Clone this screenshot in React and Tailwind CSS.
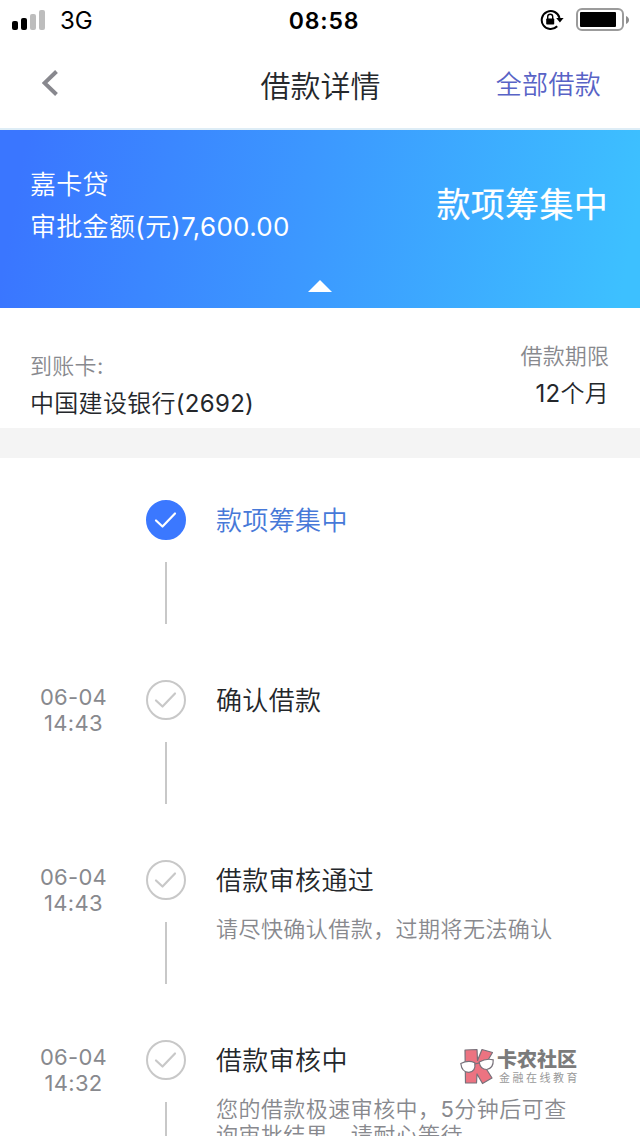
import React from "react";

function StatusBar() {
  return (
    <div className="flex h-10 shrink-0 items-center justify-between pl-3 pr-[11px] text-black">
      <div className="flex w-[160px] items-center">
        <svg width="34" height="20" viewBox="0 0 34 20">
          <rect x="0" y="11" width="6" height="9" rx="2" fill="#000" />
          <rect x="9" y="8" width="6" height="12" rx="2" fill="#000" />
          <rect x="18" y="4" width="6" height="16" rx="2" fill="#bdbdbd" />
          <rect x="27" y="0" width="6" height="20" rx="2" fill="#bdbdbd" />
        </svg>
        <span className="pl-[14px] pt-[2px] text-[24px] leading-[38px]">3G</span>
      </div>
      <span className="pl-[7px] pt-[2px] text-[23px] font-semibold leading-[38px] tracking-[0.8px]">08:58</span>
      <div className="flex w-[160px] items-center justify-end gap-[12px]">
        <svg width="24" height="22" viewBox="0 0 24 22">
          <path d="M17.200 17.300A9 9 0 1 1 19.500 9" fill="none" stroke="#000" strokeWidth="2" />
          <path d="M16.200 9h7.400l-3.700 4.600z" fill="#000" />
          <rect x="6.200" y="9.500" width="8" height="6" rx="0.800" fill="#000" />
          <path d="M7.700 10V7.700a2.500 2.500 0 0 1 5 0V10" fill="none" stroke="#000" strokeWidth="1.400" />
        </svg>
        <svg width="53" height="24" viewBox="0 0 53 24">
          <rect x="1" y="1" width="46" height="21" rx="5" fill="none" stroke="#9b9b9b" strokeWidth="2" />
          <rect x="4" y="4" width="36" height="15" rx="1" fill="#000" />
          <path d="M50 8c4 1.500 4 6.500 0 8z" fill="#8d8d8d" />
        </svg>
      </div>
    </div>
  );
}

function NavBar() {
  return (
    <div className="grid h-[90px] shrink-0 grid-cols-3 border-b-2 border-[#deedf6] pl-[40px] pr-[39px] pt-[24px]">
      <svg className="ml-[2px] mt-[6px]" width="17" height="26" viewBox="0 0 17 26">
        <path d="M14.500 1.500L2.500 13l12 11.500" fill="none" stroke="#88888e" strokeWidth="4" />
      </svg>
      <h1 className="whitespace-nowrap text-center text-[30px] leading-[44px] text-[#24272b]">借款详情</h1>
      <span className="pt-[1px] text-right text-[26px] leading-[40px] tracking-[0.3px] text-[#5863c6]">全部借款</span>
    </div>
  );
}

function Banner() {
  return (
    <div className="flex h-[178px] shrink-0 flex-col bg-[linear-gradient(100deg,#3a76ff_4%,#3c98ff_48%,#3dc0ff_97%)] text-white">
      <div className="flex h-[150px] justify-between pl-[30px] pr-8 pt-[34px]">
        <div className="text-[26px] leading-[42px] tracking-[0.3px]">
          <div>嘉卡贷</div>
          <div>审批金额(元)7,600.00</div>
        </div>
        <div className="mt-[16px] font-['Noto_Sans_CJK_SC',sans-serif] text-[34px] font-normal leading-[46px] tracking-[0.3px] [-webkit-text-stroke:0.2px_#fff]">款项筹集中</div>
      </div>
      <svg className="mx-auto" width="24" height="12" viewBox="0 0 24 12">
        <path d="M12 0l12 12H0z" fill="#fff" />
      </svg>
    </div>
  );
}

function CardInfo() {
  return (
    <div className="flex h-[120px] shrink-0 justify-between pl-[30px] pr-[31px] text-[24px] leading-[38px] text-[#24272b]">
      <div className="pt-[39px]">
        <div className="text-[22px] tracking-[0.3px] text-[#88898e]">到账卡:</div>
        <div className="tracking-[0.3px]">中国建设银行(2692)</div>
      </div>
      <div className="pt-[29px] text-right">
        <div className="text-[22px] tracking-[0.1px] text-[#88898e]">借款期限</div>
        <div className="tracking-[0.3px]">12个月</div>
      </div>
    </div>
  );
}

const steps = [
  { title: "款项筹集中", active: true },
  { title: "确认借款", date: "06-04", time: "14:43" },
  { title: "借款审核通过", date: "06-04", time: "14:43", desc: ["请尽快确认借款，过期将无法确认"] },
  { title: "借款审核中", date: "06-04", time: "14:32", desc: ["您的借款极速审核中，5分钟后可查", "询审批结果，请耐心等待"] },
];

function Step({ step }) {
  return (
    <li className="flex h-[180px] shrink-0">
      <div className="w-[147px] pt-[4px] text-center text-[22px] leading-[26px] tracking-[0.3px] text-[#88898e]">
        <div>{step.date}</div>
        <div>{step.time}</div>
      </div>
      <div className="-ml-px flex w-10 flex-col items-center gap-[22px]">
        <svg width="40" height="40" viewBox="0 0 40 40" className="shrink-0">
          <circle cx="20" cy="20" r="19" fill={step.active ? "#3b78ff" : "#fff"} stroke={step.active ? "#3b78ff" : "#c8c8c8"} strokeWidth="2" />
          <path d="M10 20.500l6.500 6L29 13.500" fill="none" stroke={step.active ? "#fff" : "#c8c8c8"} strokeWidth="2.200" strokeLinecap="round" strokeLinejoin="round" />
        </svg>
        <div className="h-[62px] w-[2px] shrink-0 bg-[#c8c8c8]" />
      </div>
      <div className="whitespace-nowrap pl-[30px] pt-[1px]">
        <div className={step.active ? "text-[26px] leading-[40px] tracking-[0.35px] text-[#4779d8]" : "text-[26px] leading-[40px] tracking-[0.35px] text-[#24272b]"}>{step.title}</div>
        {step.desc && (
          <div className="pt-[15px] text-[22px] leading-[26px] tracking-[0.45px] text-[#88898e]">
            {step.desc.map((line) => (
              <div key={line}>{line}</div>
            ))}
          </div>
        )}
      </div>
    </li>
  );
}

function Watermark() {
  return (
    <div className="absolute left-[460px] top-[1047px] flex">
      <svg width="36" height="38" viewBox="0 0 36 38">
        <path d="M5 3l12-.5.5 11L22 2.500l10.500 3-8 13.500L32 31l-9.500 5.500L17 27l-.5 9H5.500z" fill="#ec7381" stroke="#77717a" strokeWidth="1.200" strokeLinejoin="round" />
        <path d="M.8 16.500q7.500-4 14-.8 1.200 9-6 9.600-7 0-8-8.800zM19.200 15q7-4 14-2.200.5 8.500-6.500 9.700-6.500 0-7.500-7.500z" fill="#fff" stroke="#77717a" strokeWidth="1.200" />
        <path d="M14.800 17l4.600-1.200" stroke="#77717a" strokeWidth="1.200" />
      </svg>
      <div className="whitespace-nowrap pl-[1px]">
        <div className="font-['Noto_Sans_CJK_SC',sans-serif] text-[20px] font-black leading-[24px] text-[#7b7b7b]">卡农社区</div>
        <div className="pl-[2px] font-['Noto_Sans_CJK_SC',sans-serif] text-[11px] leading-[12px] tracking-[2.500px] text-[#999]">金融在线教育</div>
      </div>
    </div>
  );
}

export default function App() {
  return (
    <div className="relative flex h-[1136px] w-[640px] flex-col overflow-hidden bg-white font-['Inter','Noto_Sans_CJK_SC_DemiLight','Noto_Sans_CJK_SC',sans-serif]">
      <StatusBar />
      <NavBar />
      <Banner />
      <CardInfo />
      <div className="h-[30px] shrink-0 bg-[#f4f4f4]" />
      <ul className="flex flex-col pt-[42px]">
        {steps.map((step) => (
          <Step key={step.title} step={step} />
        ))}
      </ul>
      <Watermark />
    </div>
  );
}
